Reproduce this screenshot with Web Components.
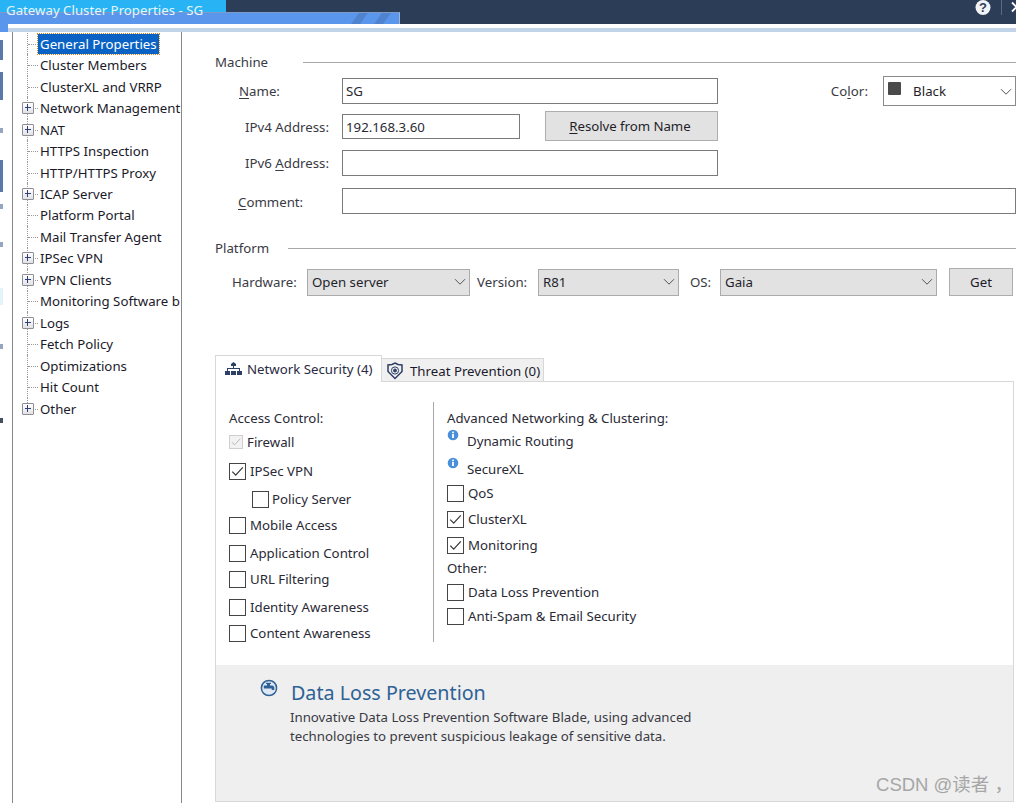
<!DOCTYPE html>
<html>
<head>
<meta charset="utf-8">
<title>Gateway Cluster Properties</title>
<style>
    html, body { margin: 0; padding: 0; background: #fff; }
    body { width: 1016px; height: 803px; overflow: hidden; font: 13.25px "Noto Sans", "Noto Sans CJK SC", sans-serif; color: #1a1a2a; }
</style>
</head>
<body>
<gateway-dialog>
    <tree-item slot="tree" selected>General Properties</tree-item>
    <tree-item slot="tree">Cluster Members</tree-item>
    <tree-item slot="tree">ClusterXL and VRRP</tree-item>
    <tree-item slot="tree" plus>Network Management</tree-item>
    <tree-item slot="tree" plus>NAT</tree-item>
    <tree-item slot="tree">HTTPS Inspection</tree-item>
    <tree-item slot="tree">HTTP/HTTPS Proxy</tree-item>
    <tree-item slot="tree" plus>ICAP Server</tree-item>
    <tree-item slot="tree">Platform Portal</tree-item>
    <tree-item slot="tree">Mail Transfer Agent</tree-item>
    <tree-item slot="tree" plus>IPSec VPN</tree-item>
    <tree-item slot="tree" plus>VPN Clients</tree-item>
    <tree-item slot="tree">Monitoring Software b</tree-item>
    <tree-item slot="tree" plus>Logs</tree-item>
    <tree-item slot="tree">Fetch Policy</tree-item>
    <tree-item slot="tree">Optimizations</tree-item>
    <tree-item slot="tree">Hit Count</tree-item>
    <tree-item slot="tree" plus last>Other</tree-item>

    <general-page slot="page"></general-page>
    <water-mark slot="mark">CSDN @读者 ，</water-mark>
</gateway-dialog>

<script>
const tick = `<svg viewBox="0 0 15 15"><path d="M2.300 7.600l3.400 3.600L12.800 3.400" fill="none" stroke="currentColor" stroke-width="1.250"/></svg>`;

class TreeItem extends HTMLElement {
    constructor() {
        super();
        const plus = this.hasAttribute('plus');
        this.attachShadow({ mode: 'open' }).innerHTML = `
            <style>
                :host { display: block; height: 21.47px; position: relative; white-space: nowrap; }
                .row { display: flex; align-items: center; height: 100%; padding-left: 40px; }
                .label { line-height: 20px; }
                :host([selected]) .label { background: #0a63c4; color: #fff; outline: 1px dotted #c9822a; margin-left: -2px; padding: 0 2px; }
                .vline { position: absolute; left: 27px; top: 0; bottom: 0; border-left: 1px dotted #999; }
                :host([last]) .vline { bottom: 50%; }
                .hline { position: absolute; left: 28px; width: 10px; top: 50%; border-top: 1px dotted #999; }
                .box { position: absolute; left: 22px; top: 50%; margin-top: -6px; width: 12px; height: 12px; box-sizing: border-box; background: linear-gradient(#fff, #e2e2e6); border: 1px solid #8e8e94; border-radius: 1px; }
                .box::before { content: ''; position: absolute; left: 2px; right: 2px; top: 4px; height: 1px; background: #2c3f78; }
                .box::after { content: ''; position: absolute; top: 1px; bottom: 2px; left: 4px; width: 1px; background: #2c3f78; }
            </style>
            <span class="vline"></span><span class="hline"></span>
            ${plus ? '<span class="box"></span>' : ''}
            <div class="row"><span class="label"><slot></slot></span></div>`;
    }
}
customElements.define('tree-item', TreeItem);

class GroupTitle extends HTMLElement {
    constructor() {
        super();
        this.attachShadow({ mode: 'open' }).innerHTML = `
            <style>
                :host { display: flex; align-items: center; height: 18px; line-height: 18px; color: #3a3a44; }
                i { flex: 1; border-top: 1px solid #a8a8a8; margin-left: var(--rule-gap, 20px); }
            </style>
            <slot></slot><i></i>`;
    }
}
customElements.define('group-title', GroupTitle);

class TextField extends HTMLElement {
    constructor() {
        super();
        this.attachShadow({ mode: 'open' }).innerHTML = `
            <style>
                :host { display: block; box-sizing: border-box; height: 26px; border: 1px solid #7a7a7a; background: #fff; padding-left: 3px; line-height: 24px; color: #2a2a33; }
            </style><slot></slot>`;
    }
}
customElements.define('text-field', TextField);

class DropBox extends HTMLElement {
    constructor() {
        super();
        this.attachShadow({ mode: 'open' }).innerHTML = `
            <style>
                :host { display: flex; align-items: center; justify-content: space-between; box-sizing: border-box; height: 27px; border: 1px solid #ababab; background: #e2e2e2; padding: 0 3px 0 4px; color: #1f1f2a; flex: none; }
                :host([plain]) { background: #fff; border-color: #8a8a8a; height: 30px; padding-top: 1px; }
                svg { flex: none; }
            </style>
            <span><slot></slot></span>
            <svg width="12" height="8" viewBox="0 0 12 8"><path d="M1 1.200l5 5 5-5" fill="none" stroke="#555" stroke-width="1"/></svg>`;
    }
}
customElements.define('drop-box', DropBox);

class CheckRow extends HTMLElement {
    constructor() {
        super();
        this.attachShadow({ mode: 'open' }).innerHTML = `
            <style>
                :host { display: flex; align-items: center; height: 20px; gap: 4px; white-space: nowrap; color: #2a2a36; }
                .b { box-sizing: border-box; width: 17px; height: 17px; border: 1px solid #444; background: #fff; color: #3a3a3a; display: flex; align-items: center; justify-content: center; flex: none; }
                .b svg { width: 15px; height: 15px; }
                :host([disabled]) .b { width: 14px; height: 14px; border-color: #cfcfcf; background: #f2f2f2; color: #bcbcbc; }
                :host([disabled]) .b svg { width: 12px; height: 12px; }
            </style>
            <span class="b">${this.hasAttribute('checked') ? tick : ''}</span><slot></slot>`;
    }
}
customElements.define('check-row', CheckRow);

class InfoRow extends HTMLElement {
    constructor() {
        super();
        this.attachShadow({ mode: 'open' }).innerHTML = `
            <style>
                :host { display: block; position: relative; height: 20px; padding-left: 20px; line-height: 20px; white-space: nowrap; color: #2a2a36; }
                svg { position: absolute; left: 0; top: -2px; }
            </style>
            <svg width="12" height="12" viewBox="0 0 12 12"><circle cx="6" cy="6" r="5.300" fill="#4a8fdc"/><rect x="5.100" y="5" width="1.800" height="4" fill="#fff"/><rect x="5.100" y="2.600" width="1.800" height="1.600" fill="#fff"/></svg>
            <slot></slot>`;
    }
}
customElements.define('info-row', InfoRow);

class WaterMark extends HTMLElement {
    constructor() {
        super();
        this.attachShadow({ mode: 'open' }).innerHTML = `
            <style>
                :host { position: absolute; right: 3px; bottom: 7px; font: 18.500px "Liberation Sans", "Noto Sans CJK SC", sans-serif; color: #a6a6a6; white-space: nowrap; }
            </style><slot></slot>`;
    }
}
customElements.define('water-mark', WaterMark);

class GeneralPage extends HTMLElement {
    constructor() {
        super();
        this.attachShadow({ mode: 'open' }).innerHTML = `
            <style>
                :host { display: block; height: 100%; padding-left: 33px; }
                u { text-underline-offset: 2px; }
                .machine { --rule-gap: 35px; padding-top: 21px; }
                .row { display: flex; align-items: center; }
                .r1 { height: 26px; margin-top: 7px; }
                .r2 { height: 30px; margin-top: 7px; }
                .r3 { height: 26px; margin-top: 9px; }
                .r4 { height: 26px; margin-top: 12px; }
                label { box-sizing: border-box; width: 127px; flex: none; color: #3a3a44; padding-left: 30px; }
                .r2 label, .r4 label { padding-top: 1px; }
                .wide { width: 376px; }
                .ipv4 { width: 178px; height: 25px; line-height: 24px; }
                .resolve { box-sizing: border-box; width: 173px; height: 30px; margin-left: 25px; background: #e2e2e2; border: 1px solid #adadad; text-align: center; line-height: 29px; color: #1f1f2a; letter-spacing: -0.05px; padding-right: 3px; }
                .color { display: flex; align-items: center; margin-left: auto; color: #3a3a44; letter-spacing: 0.05px; }
                .color drop-box { width: 133px; margin-left: 15px; color: #1f1f2a; }
                .swatch { display: inline-block; width: 13px; height: 13px; background: #4a4a4a; border-radius: 1px; margin: 0 12px 6px 0; vertical-align: middle; }
                .grow { flex: 1; }
                .platform { margin-top: 25px; --rule-gap: 19px; }
                .hw { display: flex; align-items: center; height: 28px; margin-top: 11px; white-space: nowrap; }
                .hw span { color: #3a3a44; flex: none; }
                .get { box-sizing: border-box; width: 64px; height: 28px; margin-left: 12px; background: #e2e2e2; border: 1px solid #adadad; text-align: center; line-height: 26px; }
                .tabs { display: flex; align-items: flex-start; margin-top: 59px; height: 26px; position: relative; z-index: 1; }
                .tab { display: flex; align-items: center; box-sizing: border-box; white-space: nowrap; flex: none; }
                .tab.on { background: #fff; height: 27px; width: 167px; border: 1px solid #d8d8d8; border-bottom: 0; padding: 1px 0 1px 9px; gap: 5px; color: #2a2a44; }
                .tab.off { background: #f0f0f0; height: 23px; width: 162px; margin-top: 3px; border: 1px solid #d8d8d8; border-left: 0; border-bottom: 0; padding: 2px 0 0 4px; gap: 6px; }
                .panel { border: 1px solid #d8d8d8; height: 421px; width: 799px; box-sizing: border-box; display: flex; flex-direction: column; }
                .cols { display: flex; flex: 1; padding-top: 20px; }
                .left { width: 204px; padding: 6px 0 0 13px; }
                .right { box-sizing: border-box; padding: 6px 0 0 13px; border-left: 1px solid #a8a8a8; height: 240px; }
                .h { height: 20px; line-height: 20px; color: #2a2a36; }
                .blade { box-sizing: border-box; height: 136px; background: #efefef; position: relative; padding: 14px 0 0 74px; }
                .blade h2 { margin: 0 0 0 1px; font-weight: 400; font-size: 19.700px; line-height: 28px; color: #2e6296; }
                .blade p { margin: 1px 0 0; line-height: 18.500px; color: #3a3a44; }
                .blade svg { position: absolute; left: 44px; top: 14px; }
            </style>
            <div class="machine"><group-title>Machine</group-title></div>
            <div class="row r1">
                <label style="padding-left:24px"><u>N</u>ame:</label>
                <text-field class="wide">SG</text-field>
                <div class="color"><span style="margin-left:-1px">Co<u>l</u>or:</span><drop-box plain><span class="swatch"></span>Black</drop-box></div>
            </div>
            <div class="row r2">
                <label>IPv4 Address:</label>
                <text-field class="ipv4">192.168.3.60</text-field>
                <div class="resolve"><u>R</u>esolve from Name</div>
            </div>
            <div class="row r3">
                <label>IPv6 <u>A</u>ddress:</label>
                <text-field class="wide"></text-field>
            </div>
            <div class="row r4">
                <label style="padding-left:23px"><u>C</u>omment:</label>
                <text-field class="grow"></text-field>
            </div>
            <div class="platform"><group-title>Platform</group-title></div>
            <div class="hw">
                <span style="margin-left:17px;width:75px">Hardware:</span>
                <drop-box style="width:163px">Open server</drop-box>
                <span style="margin-left:7px;width:61px">Version:</span>
                <drop-box style="width:141px">R81</drop-box>
                <span style="margin-left:11px;width:30px">OS:</span>
                <drop-box style="width:217px">Gaia</drop-box>
                <div class="get">Get</div>
            </div>
            <div class="tabs">
                <div class="tab on">
                    <svg width="17" height="14" viewBox="0 0 17 14" fill="#2e3f66"><path d="M6 4V2l2.500-2L11 2v2z"/><rect x="8" y="4" width="1" height="3"/><rect x="2" y="6" width="13" height="1"/><rect x="2" y="6" width="1" height="3"/><rect x="14" y="6" width="1" height="3"/><rect x="0" y="9" width="5" height="4"/><rect x="6" y="9" width="5" height="4"/><rect x="12" y="9" width="5" height="4"/></svg>
                    Network Security (4)
                </div>
                <div class="tab off">
                    <svg width="18" height="18" viewBox="0 0 18 18" fill="none" stroke="#2e3f66"><path d="M9 1l3 1.500 4 .5v6.500L9 16.500 2 9.500V3l4-.5z" stroke-width="1.500"/><circle cx="9" cy="8.500" r="3.600"/><circle cx="9" cy="8.500" r="1.500" fill="#2e3f66"/></svg>
                    Threat Prevention (0)
                </div>
            </div>
            <div class="panel">
                <div class="cols">
                    <div class="left">
                        <div class="h">Access Control:</div>
                        <check-row checked disabled style="margin-top:4px">Firewall</check-row>
                        <check-row checked style="margin-top:9px">IPSec VPN</check-row>
                        <check-row style="margin:8px 0 0 23px;gap:3px">Policy Server</check-row>
                        <check-row style="margin-top:6px">Mobile Access</check-row>
                        <check-row style="margin-top:8px">Application Control</check-row>
                        <check-row style="margin-top:6px">URL Filtering</check-row>
                        <check-row style="margin-top:8px">Identity Awareness</check-row>
                        <check-row style="margin-top:6px">Content Awareness</check-row>
                    </div>
                    <div class="right">
                        <div class="h">Advanced Networking &amp; Clustering:</div>
                        <info-row style="margin-top:3px">Dynamic Routing</info-row>
                        <info-row style="margin-top:8px">SecureXL</info-row>
                        <check-row style="margin-top:4px">QoS</check-row>
                        <check-row checked style="margin-top:6px">ClusterXL</check-row>
                        <check-row checked style="margin-top:6px">Monitoring</check-row>
                        <div class="h" style="margin-top:3px">Other:</div>
                        <check-row style="margin-top:4px">Data Loss Prevention</check-row>
                        <check-row style="margin-top:4px">Anti-Spam &amp; Email Security</check-row>
                    </div>
                </div>
                <div class="blade">
                    <svg width="18" height="18" viewBox="0 0 18 18"><circle cx="9" cy="9" r="7.600" fill="#dfe8f2" stroke="#2e6296" stroke-width="1.500"/><path d="M3.800 6.500H7V5H6V3.800h5V5h-1v1.500h2c1.500 0 2.300 1 2.300 2.500v2h-2.600V9.600H3.800z" fill="#2e6296"/></svg>
                    <h2>Data Loss Prevention</h2>
                    <p>Innovative Data Loss Prevention Software Blade, using advanced<br>technologies to prevent suspicious leakage of sensitive data.</p>
                </div>
            </div>`;
    }
}
customElements.define('general-page', GeneralPage);

class GatewayDialog extends HTMLElement {
    constructor() {
        super();
        this.attachShadow({ mode: 'open' }).innerHTML = `
            <style>
                :host { display: block; width: 1016px; height: 803px; position: relative; overflow: hidden; background: #fff; }
                .head { height: 24px; background: #2c3e57; position: relative; }
                .title { position: absolute; left: 0; top: 0; width: 226px; height: 13px; background: #28b4f4; }
                .back { position: absolute; left: 0; top: 12px; width: 400px; height: 12px; box-sizing: border-box; background: #5a96ec; border-top: 1px solid #7d9bc4; border-right: 1px solid #9fb6d4; overflow: hidden; }
                .back i { position: absolute; top: 0; bottom: 0; width: 9px; background: #4f83cf; transform: skewX(-35deg); }
                .caption { position: absolute; left: 6px; top: 0; color: #e6f4fc; line-height: 20px; white-space: nowrap; }
                .help { position: absolute; left: 975px; top: 0; }
                .sep { position: absolute; left: 1001px; top: 0; width: 1px; height: 15px; background: #5a6a80; }
                .close { position: absolute; left: 1011px; top: 1px; }
                .band { height: 8px; box-sizing: border-box; background: #fff; border-left: 8px solid #5a96ec; position: relative; }
                .band::after { content: ''; position: absolute; left: 0; right: 0; bottom: 0; height: 4px; background: #c2d4ea; }
                .body { display: flex; height: 771px; }
                .tree { width: 182px; flex: none; box-sizing: border-box; border-right: 1px solid #888; padding-top: 1px; overflow: hidden; position: relative; }
                .strip { position: absolute; left: 0; top: 0; bottom: 0; width: 13px; box-sizing: border-box; border-right: 1px solid #888; }
                .strip b { position: absolute; left: 0; width: 3px; background: #5a78a8; }
                .strip b.s { background: #93a7c0; height: 5px; }
                .page { flex: 1; min-width: 0; }
            </style>
            <div class="head">
                <div class="title"></div>
                <div class="back"><i style="left:355px"></i><i style="left:378px"></i></div>
                <div class="caption">Gateway Cluster Properties - SG</div>
                <svg class="help" width="16" height="16" viewBox="0 0 16 16"><circle cx="8" cy="7.500" r="7.500" fill="#f1f3f6"/><text x="8" y="12" text-anchor="middle" font-size="13" font-weight="700" font-family="Liberation Sans" fill="#2c3e57">?</text></svg>
                <div class="sep"></div>
                <svg class="close" width="5" height="12" viewBox="0 0 5 12"><path d="M1 1.500l9 9M10 1.500l-9 9" stroke="#fff" stroke-width="1.800"/></svg>
            </div>
            <div class="band"></div>
            <div class="body">
                <div class="tree">
                    <div class="strip">
                        <b style="top:8px;height:20px"></b>
                        <b style="top:40px;height:28px"></b>
                        <b class="s" style="top:96px"></b>
                        <b style="top:128px;height:32px"></b>
                        <b class="s" style="top:172px"></b>
                        <b class="s" style="top:210px"></b>
                        <b style="top:256px;height:17px;background:#e4f2fb"></b>
                        <b class="s" style="top:312px"></b>
                        <b class="s" style="top:386px;background:#44505e"></b>
                    </div>
                    <slot name="tree"></slot>
                </div>
                <div class="page"><slot name="page"></slot></div>
            </div>
            <slot name="mark"></slot>`;
    }
}
customElements.define('gateway-dialog', GatewayDialog);
</script>
</body>
</html>
